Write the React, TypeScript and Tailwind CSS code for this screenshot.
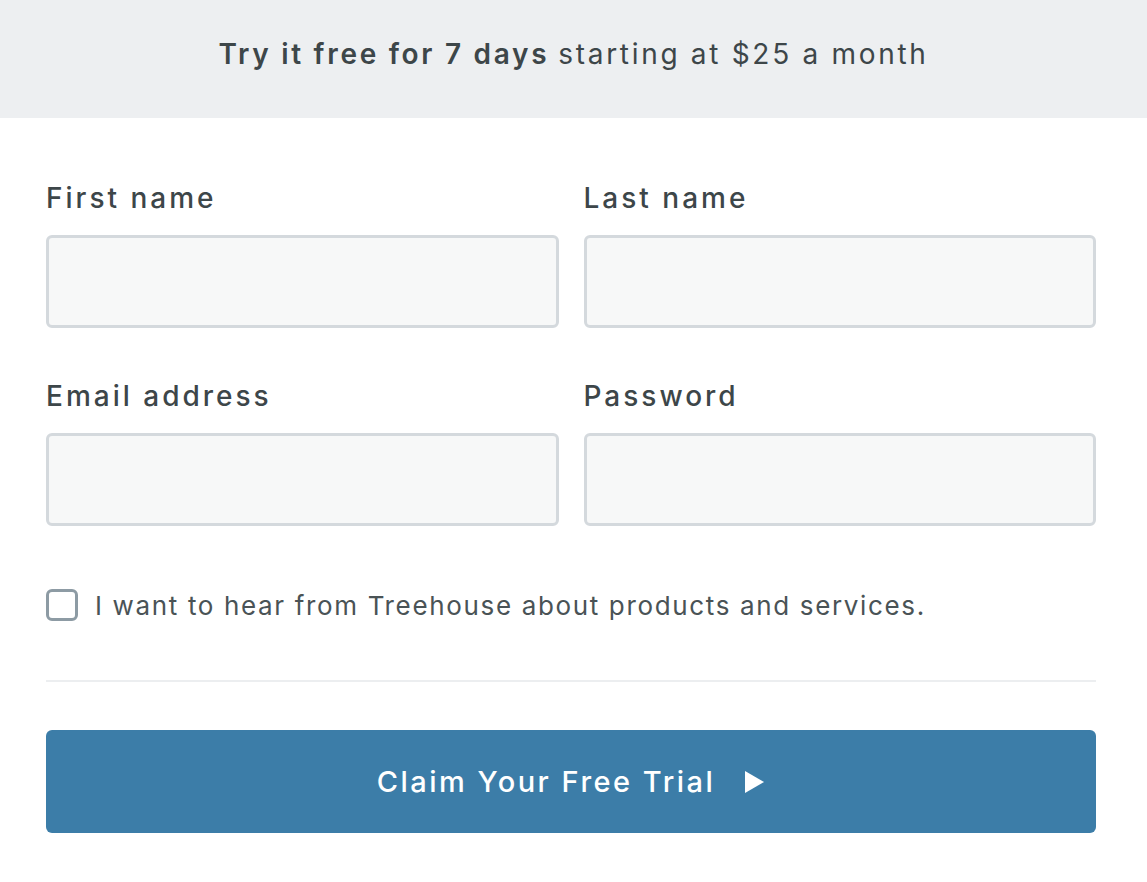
const font = { fontFamily: 'Inter, "Open Sans", "Liberation Sans", sans-serif' };

function Field({ label }: { label: string }) {
    return (
        <div className="flex flex-col">
            <label className="h-[34px] flex items-center text-[28px] font-medium text-[#3d4649] tracking-[3px]">{label}</label>
            <input className="mt-[20px] h-[93px] w-full rounded-[6px] border-[3px] border-[#d4d9dd] bg-[#f7f8f8] outline-none" />
        </div>
    );
}

export default function App() {
    return (
        <div className="w-[1147px] h-[882px] bg-white" style={font}>
            <div className="h-[118px] pb-[10px] bg-[#edeff1] flex items-center justify-center text-[28px] text-[#3d4649] tracking-[2.7px]">
                <span className="font-semibold">Try it free for 7 days</span>
                <span className="ml-[9px]">starting at $25 a month</span>
            </div>

            <form className="pl-[46px] pr-[51px] pt-[63px]">
                <div className="grid grid-cols-2 gap-x-[25px] gap-y-[51px]">
                    <Field label="First name" />
                    <Field label="Last name" />
                    <Field label="Email address" />
                    <Field label="Password" />
                </div>

                <label className="mt-[63px] h-[32px] flex items-center gap-[17px]">
                    <span className="w-[32px] h-[32px] rounded-[6px] border-[3px] border-[#8d9ba4] bg-white shrink-0" />
                    <span className="text-[26px] text-[#4a5356] tracking-[1.65px]">I want to hear from Treehouse about products and services.</span>
                </label>

                <div className="mt-[59px] h-[2px] bg-[#eceef0]" />

                <button
                    type="button"
                    className="mt-[48px] w-full h-[103px] rounded-[6px] bg-[#3c7da8] flex items-center justify-center gap-[29px] text-white text-[29px] font-medium tracking-[2.5px]"
                >
                    <span>Claim Your Free Trial</span>
                    <svg width="21" height="24" viewBox="0 0 21 24">
                        <path d="M1 1 L20 12 L1 23 Z" fill="white" />
                    </svg>
                </button>
            </form>
        </div>
    );
}
